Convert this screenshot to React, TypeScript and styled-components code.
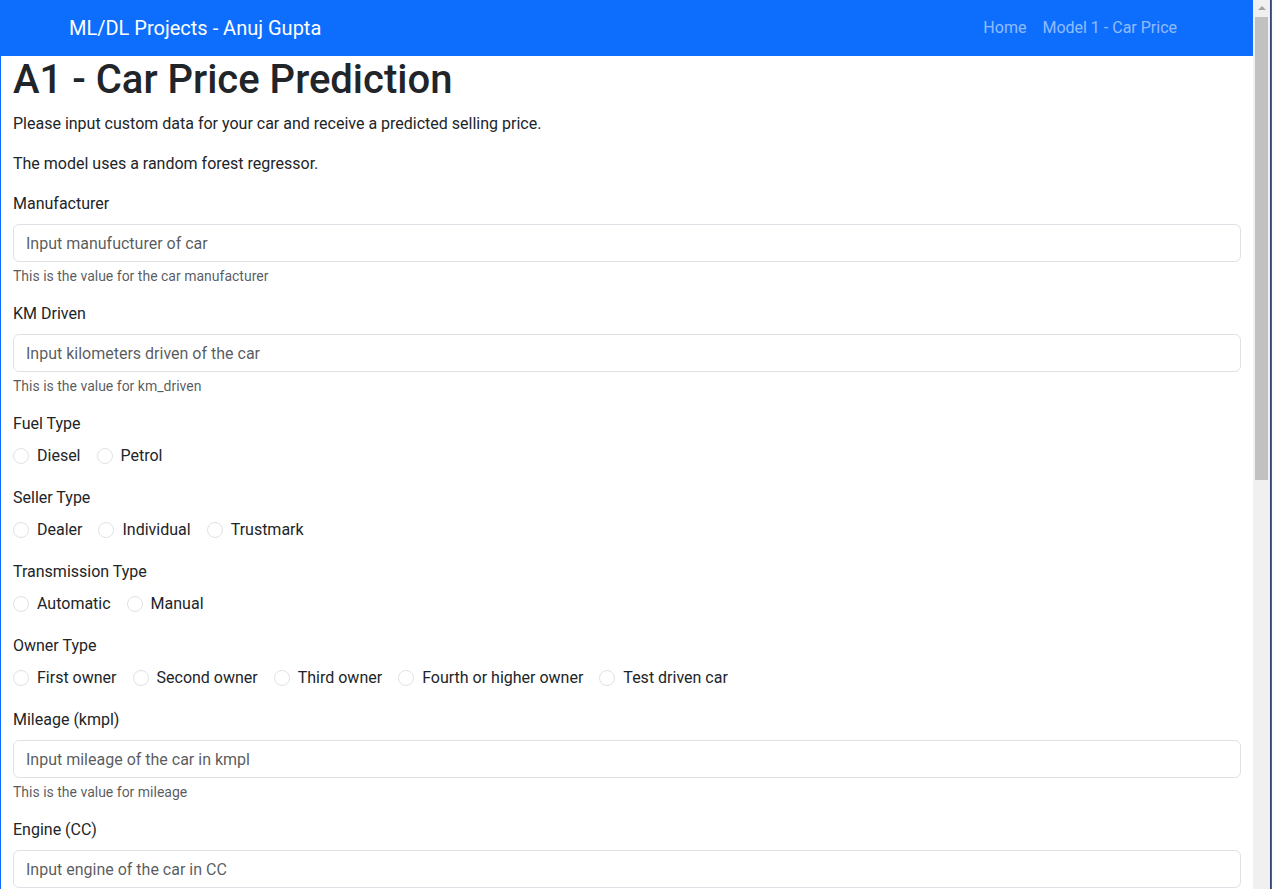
import React from 'react'
import styled, { createGlobalStyle } from 'styled-components'

const GlobalStyle = createGlobalStyle`
    html, body {
        margin: 0;
        padding: 0;
        height: 100%;
        overflow: hidden;
    }
    body {
        font-family: "Segoe UI", Roboto, "Noto Sans", "Liberation Sans", sans-serif;
        font-size: 16px;
        line-height: 1.5;
        color: #212529;
        background: #fff;
    }
    *, *::before, *::after {
        box-sizing: border-box;
    }
`

const Frame = styled.div`
    display: flex;
    height: 100vh;
    border-left: 1px solid #0d6efd;
    border-right: 1px solid #0d6efd;
`

const Page = styled.div`
    flex: 1;
    min-width: 0;
    overflow: hidden;
`

const ScrollTrack = styled.div`
    width: 18px;
    flex-shrink: 0;
    display: flex;
    flex-direction: column;
    align-items: center;
    background: #f0f0f0;
    border-right: 1px solid #33466b;
`

const ScrollArrow = styled.div`
    height: 17px;
    width: 100%;
    display: flex;
    align-items: center;
    justify-content: center;

    &::before {
        content: '';
        width: 0;
        height: 0;
        border-left: 4px solid transparent;
        border-right: 4px solid transparent;
        border-bottom: 4px solid #a3a3a3;
        margin-top: -2px;
    }
`

const ScrollThumb = styled.div`
    width: 13px;
    height: 463px;
    background: #c1c1c1;
`

const Navbar = styled.nav`
    background: #0d6efd;
    padding: 8px 0;
`

const NavContainer = styled.div`
    max-width: 1140px;
    margin: 0 auto;
    padding: 0 12px;
    display: flex;
    align-items: center;
    justify-content: space-between;
`

const Brand = styled.a`
    color: #fff;
    font-size: 20px;
    line-height: 30px;
    padding: 5px 0;
    text-decoration: none;
`

const NavLinks = styled.div`
    display: flex;
`

const NavLink = styled.a`
    color: rgba(255, 255, 255, 0.55);
    padding: 8px;
    text-decoration: none;
`

const Main = styled.main`
    padding: 0 12px;
`

const Title = styled.h1`
    font-size: 40px;
    font-weight: 500;
    line-height: 1.2;
    margin: 0 0 8px;
`

const Lead = styled.p`
    margin: 0 0 16px;
`

const Group = styled.div`
    margin-bottom: 16px;
`

const Label = styled.label`
    display: block;
    margin-bottom: 8px;
`

const Input = styled.input`
    display: block;
    width: 100%;
    height: 38px;
    padding: 6px 12px;
    font: inherit;
    color: #212529;
    background: #fff;
    border: 1px solid #dee2e6;
    border-radius: 6px;

    &::placeholder {
        color: rgba(33, 37, 41, 0.75);
    }
`

const Help = styled.div`
    margin-top: 4px;
    font-size: 14px;
    line-height: 20px;
    color: rgba(33, 37, 41, 0.75);
`

const RadioRow = styled.div`
    display: flex;
    flex-wrap: wrap;
`

const Check = styled.label`
    display: flex;
    align-items: center;
    min-height: 24px;
    margin-right: 16px;
    margin-bottom: 2px;
`

const Radio = styled.input`
    appearance: none;
    width: 16px;
    height: 16px;
    margin: 0 8px 0 0;
    border: 1px solid #dee2e6;
    border-radius: 50%;
    background: #fff;
`

type TextField = { label: string; placeholder: string; help?: string }
type RadioField = { label: string; name: string; options: string[] }

function TextGroup({ label, placeholder, help }: TextField) {
    return (
        <Group>
            <Label>{label}</Label>
            <Input type="text" placeholder={placeholder} />
            {help && <Help>{help}</Help>}
        </Group>
    )
}

function RadioGroup({ label, name, options }: RadioField) {
    return (
        <Group>
            <Label>{label}</Label>
            <RadioRow>
                {options.map((opt) => (
                    <Check key={opt}>
                        <Radio type="radio" name={name} value={opt} />
                        {opt}
                    </Check>
                ))}
            </RadioRow>
        </Group>
    )
}

export default function App() {
    return (
        <Frame>
            <GlobalStyle />
            <Page>
                <Navbar>
                    <NavContainer>
                        <Brand href="#">ML/DL Projects - Anuj Gupta</Brand>
                        <NavLinks>
                            <NavLink href="#">Home</NavLink>
                            <NavLink href="#">Model 1 - Car Price</NavLink>
                        </NavLinks>
                    </NavContainer>
                </Navbar>
                <Main>
                    <Title>A1 - Car Price Prediction</Title>
                    <Lead>Please input custom data for your car and receive a predicted selling price.</Lead>
                    <Lead>The model uses a random forest regressor.</Lead>
                    <form onSubmit={(e) => e.preventDefault()}>
                        <TextGroup
                            label="Manufacturer"
                            placeholder="Input manufucturer of car"
                            help="This is the value for the car manufacturer"
                        />
                        <TextGroup
                            label="KM Driven"
                            placeholder="Input kilometers driven of the car"
                            help="This is the value for km_driven"
                        />
                        <RadioGroup label="Fuel Type" name="fuel" options={['Diesel', 'Petrol']} />
                        <RadioGroup label="Seller Type" name="seller" options={['Dealer', 'Individual', 'Trustmark']} />
                        <RadioGroup label="Transmission Type" name="transmission" options={['Automatic', 'Manual']} />
                        <RadioGroup
                            label="Owner Type"
                            name="owner"
                            options={['First owner', 'Second owner', 'Third owner', 'Fourth or higher owner', 'Test driven car']}
                        />
                        <TextGroup
                            label="Mileage (kmpl)"
                            placeholder="Input mileage of the car in kmpl"
                            help="This is the value for mileage"
                        />
                        <TextGroup label="Engine (CC)" placeholder="Input engine of the car in CC" />
                    </form>
                </Main>
            </Page>
            <ScrollTrack>
                <ScrollArrow />
                <ScrollThumb />
            </ScrollTrack>
        </Frame>
    )
}
